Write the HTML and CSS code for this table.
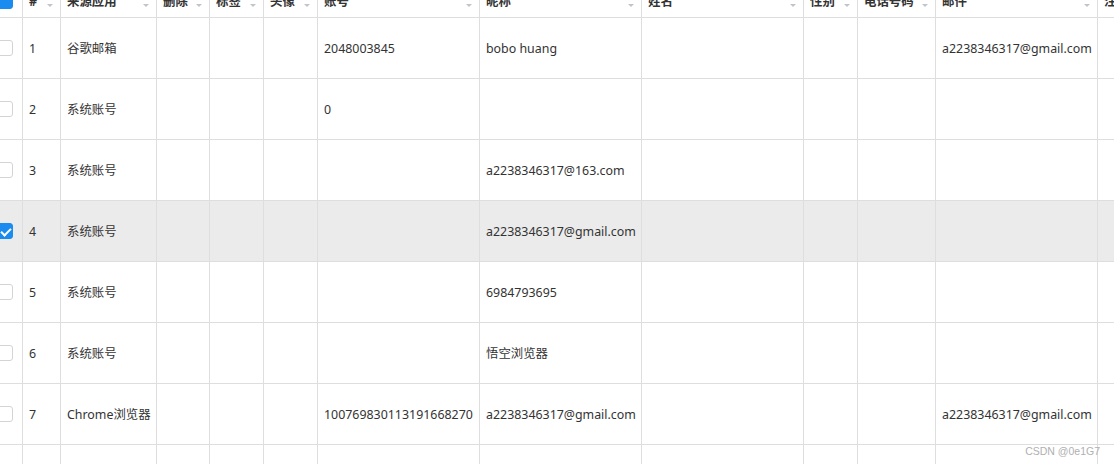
FILE: index.html
```html
<!DOCTYPE html>
<html lang="zh-CN">
<head>
  <meta charset="UTF-8">
  <title>账号列表</title>
  <link rel="stylesheet" href="styles.css">
</head>
<body>

<div class="viewport">
  <div class="grid">
    <div class="row head">
      <div class="cell check"><span class="box on"></span></div>
      <div class="cell">#<i class="caret"></i></div>
      <div class="cell">来源应用<i class="caret"></i></div>
      <div class="cell">删除<i class="caret"></i></div>
      <div class="cell">标签<i class="caret"></i></div>
      <div class="cell">头像<i class="caret"></i></div>
      <div class="cell">账号<i class="caret"></i></div>
      <div class="cell">昵称<i class="caret"></i></div>
      <div class="cell">姓名<i class="caret"></i></div>
      <div class="cell">性别<i class="caret"></i></div>
      <div class="cell">电话号码<i class="caret"></i></div>
      <div class="cell">邮件<i class="caret"></i></div>
      <div class="cell">注册时间</div>
    </div>

    <div class="row">
      <div class="cell check"><span class="box"></span></div>
      <div class="cell">1</div>
      <div class="cell">谷歌邮箱</div>
      <div class="cell"></div><div class="cell"></div><div class="cell"></div>
      <div class="cell">2048003845</div>
      <div class="cell">bobo huang</div>
      <div class="cell"></div><div class="cell"></div><div class="cell"></div>
      <div class="cell">a2238346317@gmail.com</div>
      <div class="cell"></div>
    </div>

    <div class="row">
      <div class="cell check"><span class="box"></span></div>
      <div class="cell">2</div>
      <div class="cell">系统账号</div>
      <div class="cell"></div><div class="cell"></div><div class="cell"></div>
      <div class="cell">0</div>
      <div class="cell"></div>
      <div class="cell"></div><div class="cell"></div><div class="cell"></div>
      <div class="cell"></div>
      <div class="cell"></div>
    </div>

    <div class="row">
      <div class="cell check"><span class="box"></span></div>
      <div class="cell">3</div>
      <div class="cell">系统账号</div>
      <div class="cell"></div><div class="cell"></div><div class="cell"></div>
      <div class="cell"></div>
      <div class="cell">a2238346317@163.com</div>
      <div class="cell"></div><div class="cell"></div><div class="cell"></div>
      <div class="cell"></div>
      <div class="cell"></div>
    </div>

    <div class="row selected">
      <div class="cell check"><span class="box on"></span></div>
      <div class="cell">4</div>
      <div class="cell">系统账号</div>
      <div class="cell"></div><div class="cell"></div><div class="cell"></div>
      <div class="cell"></div>
      <div class="cell">a2238346317@gmail.com</div>
      <div class="cell"></div><div class="cell"></div><div class="cell"></div>
      <div class="cell"></div>
      <div class="cell"></div>
    </div>

    <div class="row">
      <div class="cell check"><span class="box"></span></div>
      <div class="cell">5</div>
      <div class="cell">系统账号</div>
      <div class="cell"></div><div class="cell"></div><div class="cell"></div>
      <div class="cell"></div>
      <div class="cell">6984793695</div>
      <div class="cell"></div><div class="cell"></div><div class="cell"></div>
      <div class="cell"></div>
      <div class="cell"></div>
    </div>

    <div class="row">
      <div class="cell check"><span class="box"></span></div>
      <div class="cell">6</div>
      <div class="cell">系统账号</div>
      <div class="cell"></div><div class="cell"></div><div class="cell"></div>
      <div class="cell"></div>
      <div class="cell">悟空浏览器</div>
      <div class="cell"></div><div class="cell"></div><div class="cell"></div>
      <div class="cell"></div>
      <div class="cell"></div>
    </div>

    <div class="row">
      <div class="cell check"><span class="box"></span></div>
      <div class="cell">7</div>
      <div class="cell">Chrome浏览器</div>
      <div class="cell"></div><div class="cell"></div><div class="cell"></div>
      <div class="cell">100769830113191668270</div>
      <div class="cell">a2238346317@gmail.com</div>
      <div class="cell"></div><div class="cell"></div><div class="cell"></div>
      <div class="cell">a2238346317@gmail.com</div>
      <div class="cell"></div>
    </div>

    <div class="row">
      <div class="cell check"><span class="box"></span></div>
      <div class="cell">8</div>
      <div class="cell">系统账号</div>
      <div class="cell"></div><div class="cell"></div><div class="cell"></div>
      <div class="cell"></div>
      <div class="cell"></div>
      <div class="cell"></div><div class="cell"></div><div class="cell"></div>
      <div class="cell"></div>
      <div class="cell"></div>
    </div>
  </div>

  <div class="watermark">CSDN @0e1G7</div>
</div>

</body>
</html>
```

FILE: styles.css
```css
body {
  margin: 0;
  font-family: "Noto Sans", "Noto Sans CJK SC", sans-serif;
  font-size: 12.4px;
  color: #333;
  background-color: #fff;
}

.viewport {
  position: relative;
  width: 1114px;
  height: 464px;
  overflow: hidden;
}

.grid {
  margin-top: -15px;
}

.row {
  display: grid;
  grid-template-columns: 23px 38px 96px 53px 54px 54px 162px 162px 162px 54px 78px 162px 60px;
  height: 61px;
}

.row.head {
  height: 33px;
}

.cell {
  box-sizing: border-box;
  display: flex;
  align-items: center;
  padding: 0 6px;
  border-right: 1px solid #dedede;
  border-bottom: 1px solid #dedede;
  white-space: nowrap;
  overflow: hidden;
  position: relative;
}

.head .cell {
  font-weight: bold;
  color: #333;
}

.row.selected .cell {
  background-color: #ebebeb;
}

.caret {
  position: absolute;
  right: 7px;
  top: 50%;
  margin-top: 3px;
  width: 0;
  height: 0;
  border-left: 3px solid transparent;
  border-right: 3px solid transparent;
  border-top: 3px solid #c0c4cc;
}

.check {
  padding: 0;
}

.box {
  box-sizing: border-box;
  width: 16px;
  height: 16px;
  margin-left: -3px;
  border: 1px solid #d4d4d4;
  border-radius: 3px;
  background-color: #fff;
  position: relative;
}

.box.on {
  background-color: #1a8cf0;
  border-color: #1a8cf0;
}

.box.on::after {
  content: "";
  position: absolute;
  left: 5px;
  top: 2px;
  width: 4px;
  height: 8px;
  border: solid #fff;
  border-width: 0 2px 2px 0;
  transform: rotate(45deg);
}

.head .box.on::after {
  display: none;
}

.watermark {
  position: absolute;
  right: 14px;
  bottom: 7px;
  font-family: "Liberation Sans", sans-serif;
  font-size: 10.5px;
  color: #b0b0b0;
}
```
